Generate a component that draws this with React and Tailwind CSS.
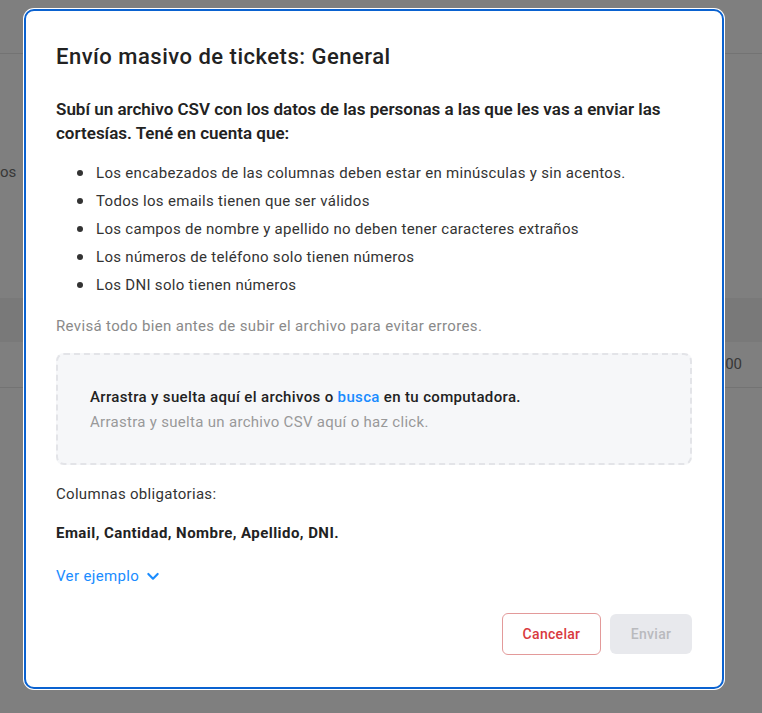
import React from 'react';

const reglas = [
  'Los encabezados de las columnas deben estar en minúsculas y sin acentos.',
  'Todos los emails tienen que ser válidos',
  'Los campos de nombre y apellido no deben tener caracteres extraños',
  'Los números de teléfono solo tienen números',
  'Los DNI solo tienen números',
];

const ChevronDown = () => (
  <svg width="16" height="16" viewBox="0 0 24 24" fill="none" stroke="currentColor" strokeWidth="3.2" strokeLinecap="round" strokeLinejoin="round">
    <path d="M5 9l7 7 7-7" />
  </svg>
);

const PaginaFondo = () => (
  <div className="h-[713px] bg-white text-[#707070]">
    <div className="h-[54px] border-b border-[#e6e6e6]" />
    <div className="pt-[106px] text-[15px] leading-[24px]">os</div>
    <div className="mt-[114px] h-[44px] bg-[#f2f2f2]" />
    <div className="h-[46px] border-b border-[#e6e6e6] flex items-center justify-end pr-[20px] text-[15px]">1.000,00</div>
  </div>
);

const App = () => {
  return (
    <div className="relative h-[713px] overflow-hidden" style={{ fontFamily: 'Roboto, "Noto Sans", sans-serif' }}>
      <PaginaFondo />
      <div className="absolute inset-0 bg-black/50" />
      <div className="absolute left-[24px] top-[9px] w-[700px] h-[680px] bg-white rounded-[10px] border-2 border-[#0a62d0] ring-1 ring-white px-[30px] pt-[32px] flex flex-col">
        <h1 className="text-[22px] leading-[28px] font-medium tracking-[0.5px] text-[#222]">Envío masivo de tickets: General</h1>

        <p className="mt-[26px] text-[17px] leading-[24px] font-semibold text-[#222]">
          Subí un archivo CSV con los datos de las personas a las que les vas a enviar las cortesías. Tené en cuenta que:
        </p>

        <ul className="mt-[14px] flex flex-col text-[15px] leading-[28px] tracking-[0.3px] text-[#333]">
          {reglas.map((r) => (
            <li key={r} className="flex items-center">
              <span className="w-[6px] h-[6px] rounded-full bg-[#333] ml-[21px] mr-[13px]" />
              {r}
            </li>
          ))}
        </ul>

        <p className="mt-[17px] text-[15px] leading-[20px] tracking-[0.35px] text-[#8a8a8a]">
          Revisá todo bien antes de subir el archivo para evitar errores.
        </p>

        <div className="mt-[17px] h-[112px] rounded-[8px] border-2 border-dashed border-[#e3e4e8] bg-[#f6f7f9] px-[32px] flex flex-col justify-center">
          <p className="text-[15px] leading-[24px] font-medium tracking-[0.35px] text-[#222]">
            Arrastra y suelta aquí el archivos o <span className="text-[#1a8cff]">busca</span> en tu computadora.
          </p>
          <p className="mt-[2px] text-[15px] leading-[22px] tracking-[0.3px] text-[#999]">
            Arrastra y suelta un archivo CSV aquí o haz click.
          </p>
        </div>

        <p className="mt-[19px] text-[15px] leading-[20px] tracking-[0.3px] text-[#333]">Columnas obligatorias:</p>
        <p className="mt-[18px] text-[15px] leading-[22px] font-bold tracking-[0.45px] text-[#222]">Email, Cantidad, Nombre, Apellido, DNI.</p>

        <button className="mt-[21px] self-start flex items-center gap-[6px] text-[15px] leading-[22px] tracking-[0.35px] text-[#1a8cff]">
          Ver ejemplo <ChevronDown />
        </button>

        <div className="mt-auto mb-[32px] flex justify-end gap-[9px]">
          <button className="w-[99px] h-[42px] rounded-[6px] border border-[#e39a9a] text-[14px] font-medium tracking-[0.3px] text-[#d93a40]">
            Cancelar
          </button>
          <button className="w-[82px] h-[40px] mt-px rounded-[6px] bg-[#e8e9ed] text-[14px] font-medium tracking-[0.3px] text-[#b9babe]">
            Enviar
          </button>
        </div>
      </div>
    </div>
  );
};

export default App;
